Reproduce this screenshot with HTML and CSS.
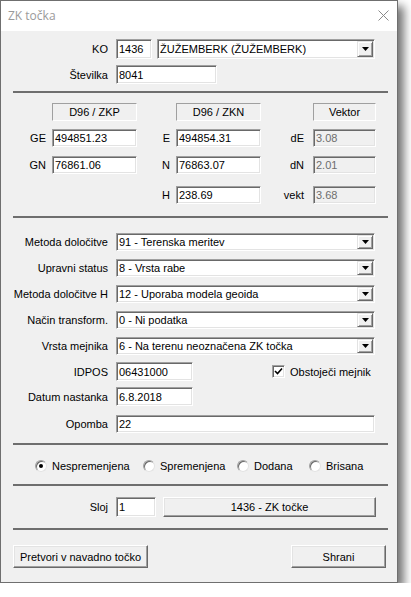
FILE: index.html
```html
<!DOCTYPE html>
<html lang="sl">
<head>
<meta charset="utf-8">
<title>ZK točka</title>
<link rel="stylesheet" href="styles.css">
</head>
<body>
<div class="win">
  <div class="titlebar">
    <span class="title">ZK točka</span>
    <svg class="close" width="11" height="11" viewBox="0 0 11 11"><path d="M0.5 0.5 L10.5 10.5 M10.5 0.5 L0.5 10.5" stroke="#8a8a8a" stroke-width="1" fill="none"/></svg>
  </div>
  <div class="content">
    <div class="sec1">
      <div class="row r-ko">
        <span class="lbl">KO</span>
        <div class="edit w-ko">1436</div>
        <div class="edit combo w-kosel"><span class="ctext">ŽUŽEMBERK (ŽUŽEMBERK)</span><span class="dd"><svg width="7" height="4" viewBox="0 0 7 4"><polygon points="0,0 7,0 3.5,4" fill="#000"/></svg></span></div>
      </div>
      <div class="row r-st">
        <span class="lbl">Številka</span>
        <div class="edit w-st">8041</div>
      </div>
    </div>
    <div class="sep s1"></div>
    <div class="coords">
      <div class="crow c-hdr">
        <span class="cl"></span><div class="hdr f85">D96 / ZKP</div>
        <span class="cl"></span><div class="hdr f85">D96 / ZKN</div>
        <span class="cl c3"></span><div class="hdr f63">Vektor</div>
      </div>
      <div class="crow c-ge">
        <span class="cl">GE</span><div class="edit f85">494851.23</div>
        <span class="cl">E</span><div class="edit f85">494854.31</div>
        <span class="cl c3">dE</span><div class="edit f63 dis">3.08</div>
      </div>
      <div class="crow c-gn">
        <span class="cl">GN</span><div class="edit f85">76861.06</div>
        <span class="cl">N</span><div class="edit f85">76863.07</div>
        <span class="cl c3">dN</span><div class="edit f63 dis">2.01</div>
      </div>
      <div class="crow c-h">
        <span class="cl"></span><span class="f85"></span>
        <span class="cl">H</span><div class="edit f85">238.69</div>
        <span class="cl c3">vekt</span><div class="edit f63 dis">3.68</div>
      </div>
    </div>
    <div class="sep s2"></div>
    <div class="attrs">
      <div class="row r-sel first">
        <span class="lbl">Metoda določitve</span>
        <div class="edit combo w-full"><span class="ctext">91 - Terenska meritev</span><span class="dd"><svg width="7" height="4" viewBox="0 0 7 4"><polygon points="0,0 7,0 3.5,4" fill="#000"/></svg></span></div>
      </div>
      <div class="row r-sel">
        <span class="lbl">Upravni status</span>
        <div class="edit combo w-full"><span class="ctext">8 - Vrsta rabe</span><span class="dd"><svg width="7" height="4" viewBox="0 0 7 4"><polygon points="0,0 7,0 3.5,4" fill="#000"/></svg></span></div>
      </div>
      <div class="row r-sel">
        <span class="lbl">Metoda določitve H</span>
        <div class="edit combo w-full"><span class="ctext">12 - Uporaba modela geoida</span><span class="dd"><svg width="7" height="4" viewBox="0 0 7 4"><polygon points="0,0 7,0 3.5,4" fill="#000"/></svg></span></div>
      </div>
      <div class="row r-sel">
        <span class="lbl">Način transform.</span>
        <div class="edit combo w-full"><span class="ctext">0 - Ni podatka</span><span class="dd"><svg width="7" height="4" viewBox="0 0 7 4"><polygon points="0,0 7,0 3.5,4" fill="#000"/></svg></span></div>
      </div>
      <div class="row r-sel">
        <span class="lbl">Vrsta mejnika</span>
        <div class="edit combo w-full"><span class="ctext">6 - Na terenu neoznačena ZK točka</span><span class="dd"><svg width="7" height="4" viewBox="0 0 7 4"><polygon points="0,0 7,0 3.5,4" fill="#000"/></svg></span></div>
      </div>
      <div class="row r-id">
        <span class="lbl">IDPOS</span>
        <div class="edit w-id">06431000</div>
        <label class="chk"><span class="box"><svg width="9" height="9" viewBox="0 0 9 9"><path d="M1 4 L3.5 6.5 L8 1.5" stroke="#000" stroke-width="1.6" fill="none"/></svg></span>Obstoječi mejnik</label>
      </div>
      <div class="row r-dat">
        <span class="lbl">Datum nastanka</span>
        <div class="edit w-id">6.8.2018</div>
      </div>
      <div class="row r-op">
        <span class="lbl">Opomba</span>
        <div class="edit w-full">22</div>
      </div>
    </div>
    <div class="sep s3"></div>
    <div class="radios">
      <span class="radio ri1"><span class="circ on"></span>Nespremenjena</span>
      <span class="radio ri2"><span class="circ"></span>Spremenjena</span>
      <span class="radio ri3"><span class="circ"></span>Dodana</span>
      <span class="radio ri4"><span class="circ"></span>Brisana</span>
    </div>
    <div class="sep s4"></div>
    <div class="row r-sloj">
      <span class="lbl">Sloj</span>
      <div class="edit w-sloj">1</div>
      <div class="btn w-layer">1436 - ZK točke</div>
    </div>
    <div class="sep s5"></div>
    <div class="actions">
      <div class="btn w-conv">Pretvori v navadno točko</div>
      <div class="btn w-save">Shrani</div>
    </div>
  </div>
</div>
</body>
</html>
```
FILE: styles.css
```css
html, body {
  margin: 0;
  padding: 0;
  background: #ffffff;
}
body {
  font-family: "Liberation Sans", Arial, sans-serif;
  font-size: 11px;
  color: #000;
}
.win {
  width: 396px;
  height: 581px;
  border: 1px solid #6f6f6f;
  background: #f0f0f0;
  box-shadow: 6px 6px 9px rgba(0, 0, 0, 0.55);
}
.titlebar {
  height: 30px;
  background: #ffffff;
  display: flex;
  align-items: center;
  justify-content: space-between;
  padding: 0 8px 0 7px;
}
.title {
  font-family: "Open Sans", "Noto Sans", sans-serif;
  font-size: 12px;
  color: #9a9a9a;
  margin-top: -1px;
}
.close {
  display: block;
  margin-top: -1px;
}
.content {
  padding: 0 9px 0 12px;
}
.row {
  display: flex;
  align-items: center;
}
.lbl {
  width: 95px;
  margin-right: 8px;
  text-align: right;
  white-space: nowrap;
}
.edit {
  box-sizing: border-box;
  background: #ffffff;
  border: 1px solid;
  border-color: #a0a0a0 #ffffff #ffffff #a0a0a0;
  box-shadow: inset 1px 1px 0 #696969, inset -1px -1px 0 #e3e3e3;
  padding-left: 2px;
  display: flex;
  align-items: center;
  white-space: nowrap;
  overflow: hidden;
}
.combo {
  justify-content: space-between;
  align-items: stretch;
  padding: 1px 1px 1px 2px;
}
.ctext {
  display: flex;
  align-items: center;
}
.dd {
  box-sizing: border-box;
  width: 16px;
  background: #f0f0f0;
  border: 1px solid;
  border-color: #e3e3e3 #696969 #696969 #e3e3e3;
  box-shadow: inset 1px 1px 0 #ffffff, inset -1px -1px 0 #a0a0a0;
  display: flex;
  align-items: center;
  justify-content: center;
}
.dd svg {
  display: block;
}
.sep {
  height: 2px;
  background: #6e6e6e;
}

/* section 1 */
.sec1 {
  padding-top: 8px;
}
.r-ko { height: 20px; }
.r-ko .edit { height: 20px; }
.w-ko { width: 36px; margin-right: 5px; }
.w-kosel { width: 218px; }
.r-st { margin-top: 6px; }
.w-st { width: 101px; height: 19px; }
.s1 { margin-top: 7px; }

/* coordinates */
.coords {
  padding-top: 10px;
}
.crow {
  display: flex;
  align-items: center;
  height: 18px;
}
.c-ge { margin-top: 8px; }
.c-gn { margin-top: 9px; }
.c-h { margin-top: 12px; }
.cl {
  box-sizing: border-box;
  width: 39px;
  text-align: right;
  padding-right: 6px;
}
.cl.c3 {
  width: 52px;
  padding-right: 9px;
}
.f85 { width: 85px; height: 18px; }
.f63 { width: 63px; height: 18px; }
.hdr {
  box-sizing: border-box;
  border: 1px solid;
  border-color: #a0a0a0 #ffffff #ffffff #a0a0a0;
  display: flex;
  align-items: center;
  justify-content: center;
}
.dis {
  background: #f0f0f0;
  color: #6d6d6d;
}
.s2 { margin-top: 12px; }

/* attributes */
.attrs {
  padding-top: 15px;
}
.r-sel { margin-top: 8px; }
.r-sel.first { margin-top: 0; }
.r-sel .edit { height: 18px; }
.w-full { width: 259px; }
.r-id { margin-top: 7px; }
.w-id { width: 77px; height: 19px; }
.r-dat { margin-top: 6px; }
.r-op { margin-top: 9px; }
.r-op .edit { height: 18px; }
.chk {
  display: flex;
  align-items: center;
  margin-left: 79px;
}
.box {
  box-sizing: border-box;
  width: 13px;
  height: 13px;
  background: #ffffff;
  border: 1px solid;
  border-color: #a0a0a0 #ffffff #ffffff #a0a0a0;
  box-shadow: inset 1px 1px 0 #696969, inset -1px -1px 0 #e3e3e3;
  display: flex;
  align-items: center;
  justify-content: center;
  margin-right: 5px;
}
.box svg { display: block; }
.s3 { margin-top: 10px; }

/* radios */
.radios {
  display: flex;
  align-items: center;
  height: 13px;
  margin-top: 14px;
  padding-left: 22px;
}
.radio {
  display: flex;
  align-items: center;
}
.ri1 { width: 108px; }
.ri2 { width: 94px; }
.ri3 { width: 72px; }
.circ {
  box-sizing: border-box;
  width: 12px;
  height: 12px;
  border-radius: 50%;
  background: #ffffff;
  border: 1px solid;
  border-color: #a0a0a0 #e3e3e3 #e3e3e3 #a0a0a0;
  box-shadow: inset 1px 1px 0 #696969;
  margin-right: 5px;
  display: flex;
  align-items: center;
  justify-content: center;
}
.circ.on::after {
  content: "";
  width: 4px;
  height: 4px;
  border-radius: 50%;
  background: #000;
}
.s4 { margin-top: 12px; }

/* layer */
.r-sloj {
  margin-top: 11px;
  height: 20px;
}
.w-sloj { width: 40px; height: 20px; margin-right: 7px; }
.btn {
  box-sizing: border-box;
  background: #f0f0f0;
  border: 1px solid;
  border-color: #ffffff #696969 #696969 #ffffff;
  box-shadow: inset -1px -1px 0 #a0a0a0, inset 1px 1px 0 #e3e3e3;
  display: flex;
  align-items: center;
  justify-content: center;
  white-space: nowrap;
}
.w-layer { width: 213px; height: 20px; }
.s5 { margin-top: 11px; }

/* actions */
.actions {
  display: flex;
  justify-content: space-between;
  margin-top: 15px;
  padding-right: 2px;
}
.actions .btn { height: 23px; }
.w-conv { width: 135px; }
.w-save { width: 95px; }
```
